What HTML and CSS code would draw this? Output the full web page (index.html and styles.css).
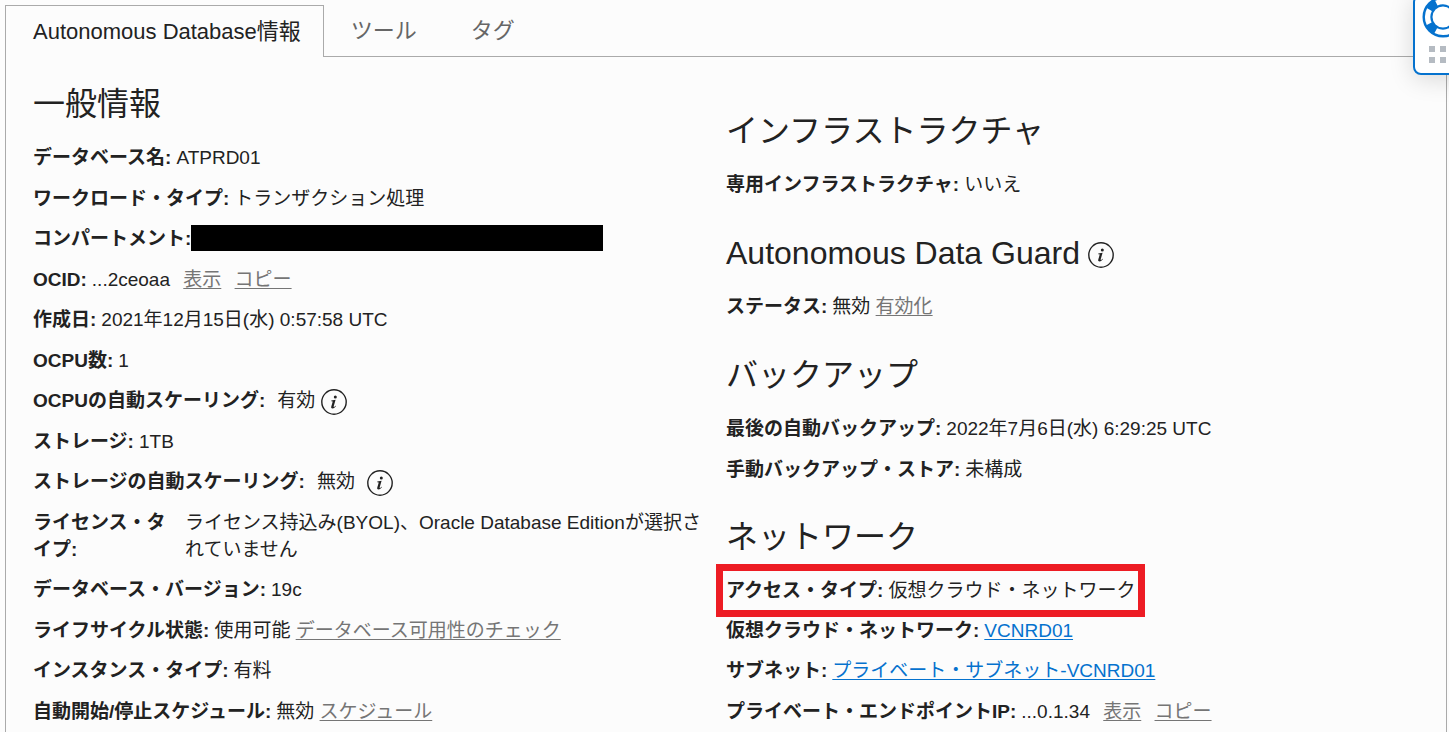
FILE: index.html
```html
<!DOCTYPE html>
<html lang="ja">
<head>
<meta charset="utf-8">
<title>Autonomous Database情報</title>
<link rel="stylesheet" href="styles.css">
</head>
<body>
<svg class="defs" aria-hidden="true">
  <symbol id="info" viewBox="0 0 26 26">
    <circle cx="13" cy="13" r="12.2" fill="none" stroke="#222" stroke-width="1.4"/>
    <circle cx="14.3" cy="7.9" r="1.5" fill="#222"/>
    <path d="M10.3 11.4l4.3-.7-1.9 6.6c-.2.8.3.9.8.5l1-1.1.5.4c-1.1 1.7-2.2 2.3-3.3 2.3-1.4 0-1.8-.8-1.4-2l1.3-4.5c.1-.5 0-.7-.5-.7h-.9z" fill="#222"/>
  </symbol>
</svg>
<main class="page">
  <nav class="tabs">
    <button class="tab tab-active" type="button">Autonomous Database情報</button>
    <button class="tab" type="button">ツール</button>
    <button class="tab" type="button">タグ</button>
  </nav>
  <div class="panel">
    <section class="column">
      <h2 class="heading">一般情報</h2>
      <dl class="rows">
        <div class="row"><dt>データベース名:</dt><dd>ATPRD01</dd></div>
        <div class="row"><dt>ワークロード・タイプ:</dt><dd>トランザクション処理</dd></div>
        <div class="row row-flush"><dt>コンパートメント:</dt><dd class="redacted"></dd></div>
        <div class="row"><dt>OCID:</dt><dd class="actions">...2ceoaa <a href="#">表示</a> <a href="#">コピー</a></dd></div>
        <div class="row"><dt>作成日:</dt><dd>2021年12月15日(水) 0:57:58 UTC</dd></div>
        <div class="row"><dt>OCPU数:</dt><dd>1</dd></div>
        <div class="row row-wide"><dt>OCPUの自動スケーリング:</dt><dd>有効</dd><dd class="tip"><svg class="info"><use href="#info"/></svg></dd></div>
        <div class="row"><dt>ストレージ:</dt><dd>1TB</dd></div>
        <div class="row row-wide"><dt>ストレージの自動スケーリング:</dt><dd>無効</dd><dd class="tip tip-far"><svg class="info"><use href="#info"/></svg></dd></div>
        <div class="row row-split"><dt>ライセンス・タイプ:</dt><dd>ライセンス持込み(BYOL)、Oracle Database Editionが選択されていません</dd></div>
        <div class="row"><dt>データベース・バージョン:</dt><dd>19c</dd></div>
        <div class="row"><dt>ライフサイクル状態:</dt><dd>使用可能 <a href="#">データベース可用性のチェック</a></dd></div>
        <div class="row"><dt>インスタンス・タイプ:</dt><dd>有料</dd></div>
        <div class="row"><dt>自動開始/停止スケジュール:</dt><dd>無効 <a href="#">スケジュール</a></dd></div>
      </dl>
    </section>
    <div class="column column-right">
      <section>
        <h2 class="heading">インフラストラクチャ</h2>
        <dl class="rows">
          <div class="row"><dt>専用インフラストラクチャ:</dt><dd>いいえ</dd></div>
        </dl>
      </section>
      <section>
        <h2 class="heading">Autonomous Data Guard <svg class="info"><use href="#info"/></svg></h2>
        <dl class="rows">
          <div class="row"><dt>ステータス:</dt><dd>無効 <a href="#">有効化</a></dd></div>
        </dl>
      </section>
      <section>
        <h2 class="heading">バックアップ</h2>
        <dl class="rows">
          <div class="row"><dt>最後の自動バックアップ:</dt><dd>2022年7月6日(水) 6:29:25 UTC</dd></div>
          <div class="row"><dt>手動バックアップ・ストア:</dt><dd>未構成</dd></div>
        </dl>
      </section>
      <section>
        <h2 class="heading">ネットワーク</h2>
        <dl class="rows">
          <div class="row row-marked"><dt>アクセス・タイプ:</dt><dd>仮想クラウド・ネットワーク</dd></div>
          <div class="row"><dt>仮想クラウド・ネットワーク:</dt><dd><a class="link" href="#">VCNRD01</a></dd></div>
          <div class="row"><dt>サブネット:</dt><dd><a class="link" href="#">プライベート・サブネット-VCNRD01</a></dd></div>
          <div class="row"><dt>プライベート・エンドポイントIP:</dt><dd class="actions">...0.1.34 <a href="#">表示</a> <a href="#">コピー</a></dd></div>
        </dl>
      </section>
    </div>
  </div>
</main>
<button class="help" type="button" aria-label="ヘルプ">
  <svg class="buoy" viewBox="0 0 42 42">
    <circle cx="21" cy="21" r="15.5" fill="none" stroke="#0572ce" stroke-width="10"/>
    <circle cx="21" cy="21" r="15.4" fill="none" stroke="#fff" stroke-width="5.4" stroke-dasharray="14.7 9.49" stroke-dashoffset="7.35"/>
  </svg>
  <svg class="grip" viewBox="0 0 28 17" fill="#b5bbc2">
    <path d="M0 0h6v6H0zM11 0h6v6h-6zM22 0h6v6h-6zM0 11h6v6H0zM11 11h6v6h-6zM22 11h6v6h-6z"/>
  </svg>
</button>
</body>
</html>
```
FILE: styles.css
```css
* { box-sizing: border-box; }
body {
  margin: 0;
  background: #fcfcfc;
  color: #222;
  font: 19px/27px "Liberation Sans", "Noto Sans CJK JP", sans-serif;
  overflow: hidden;
}
.defs { position: absolute; width: 0; height: 0; }
.page {
  display: flex;
  flex-direction: column;
  min-height: 100vh;
  padding: 5px 2px 0 5px;
}
.tabs { display: flex; }
.tabs::after { content: ""; flex: 1; border-bottom: 1px solid #aaa; }
.tab {
  height: 52px;
  padding: 0 27px;
  border: 0;
  border-bottom: 1px solid #aaa;
  background: none;
  color: #666;
  font: inherit;
  font-size: 22px;
}
.tab-active {
  padding: 0 22px 0 27px;
  border: 1px solid #aaa;
  border-bottom: 0;
  color: #222;
}
.panel {
  flex: 1;
  display: grid;
  grid-template-columns: 1fr 1fr;
  padding: 24px 27px 0;
  border: solid #aaa;
  border-width: 0 1px;
}
.column-right {
  display: grid;
  gap: 31px;
  align-content: start;
  padding-top: 27px;
}
.heading {
  display: flex;
  align-items: center;
  gap: 8px;
  margin: 0 0 17px;
  font-size: 32px;
  font-weight: 400;
  line-height: 46px;
}
.rows { display: grid; gap: 13px; margin: 0; }
.row { display: flex; gap: 5px; min-height: 27px; }
.row:nth-child(odd) { min-height: 28px; }
.row-flush { gap: 0; }
.row-wide { gap: 12px; }
.row-split { gap: 0; padding-right: 16px; }
.row-split dt { flex: 0 0 152px; padding-right: 10px; }
dt { font-weight: 700; }
dd { margin: 0; }
a { color: #757575; text-underline-offset: 2px; text-decoration-thickness: 1px; }
.link { color: #0572ce; }
.actions a { margin-left: 8px; }
.redacted { width: 412px; height: 26px; background: #000; }
.info { display: block; width: 26px; height: 26px; }
.heading .info { margin-top: 4px; }
.tip { display: flex; align-items: end; margin-left: -6px; }
.tip-far { margin-left: 0; }
.row-marked {
  justify-self: start;
  margin: -13px -10px;
  padding: 6px 3px;
  border: 7px solid #ed1c24;
}
.help {
  position: fixed;
  top: -6px;
  right: -24px;
  display: grid;
  justify-items: center;
  gap: 8px;
  width: 60px;
  padding: 0 0 10px;
  border: 2px solid #0572ce;
  border-radius: 8px;
  background: #fff;
  box-shadow: 0 4px 24px rgb(0 0 0 / 15%);
}
.buoy { width: 42px; height: 42px; }
.grip { width: 28px; height: 17px; }
```
